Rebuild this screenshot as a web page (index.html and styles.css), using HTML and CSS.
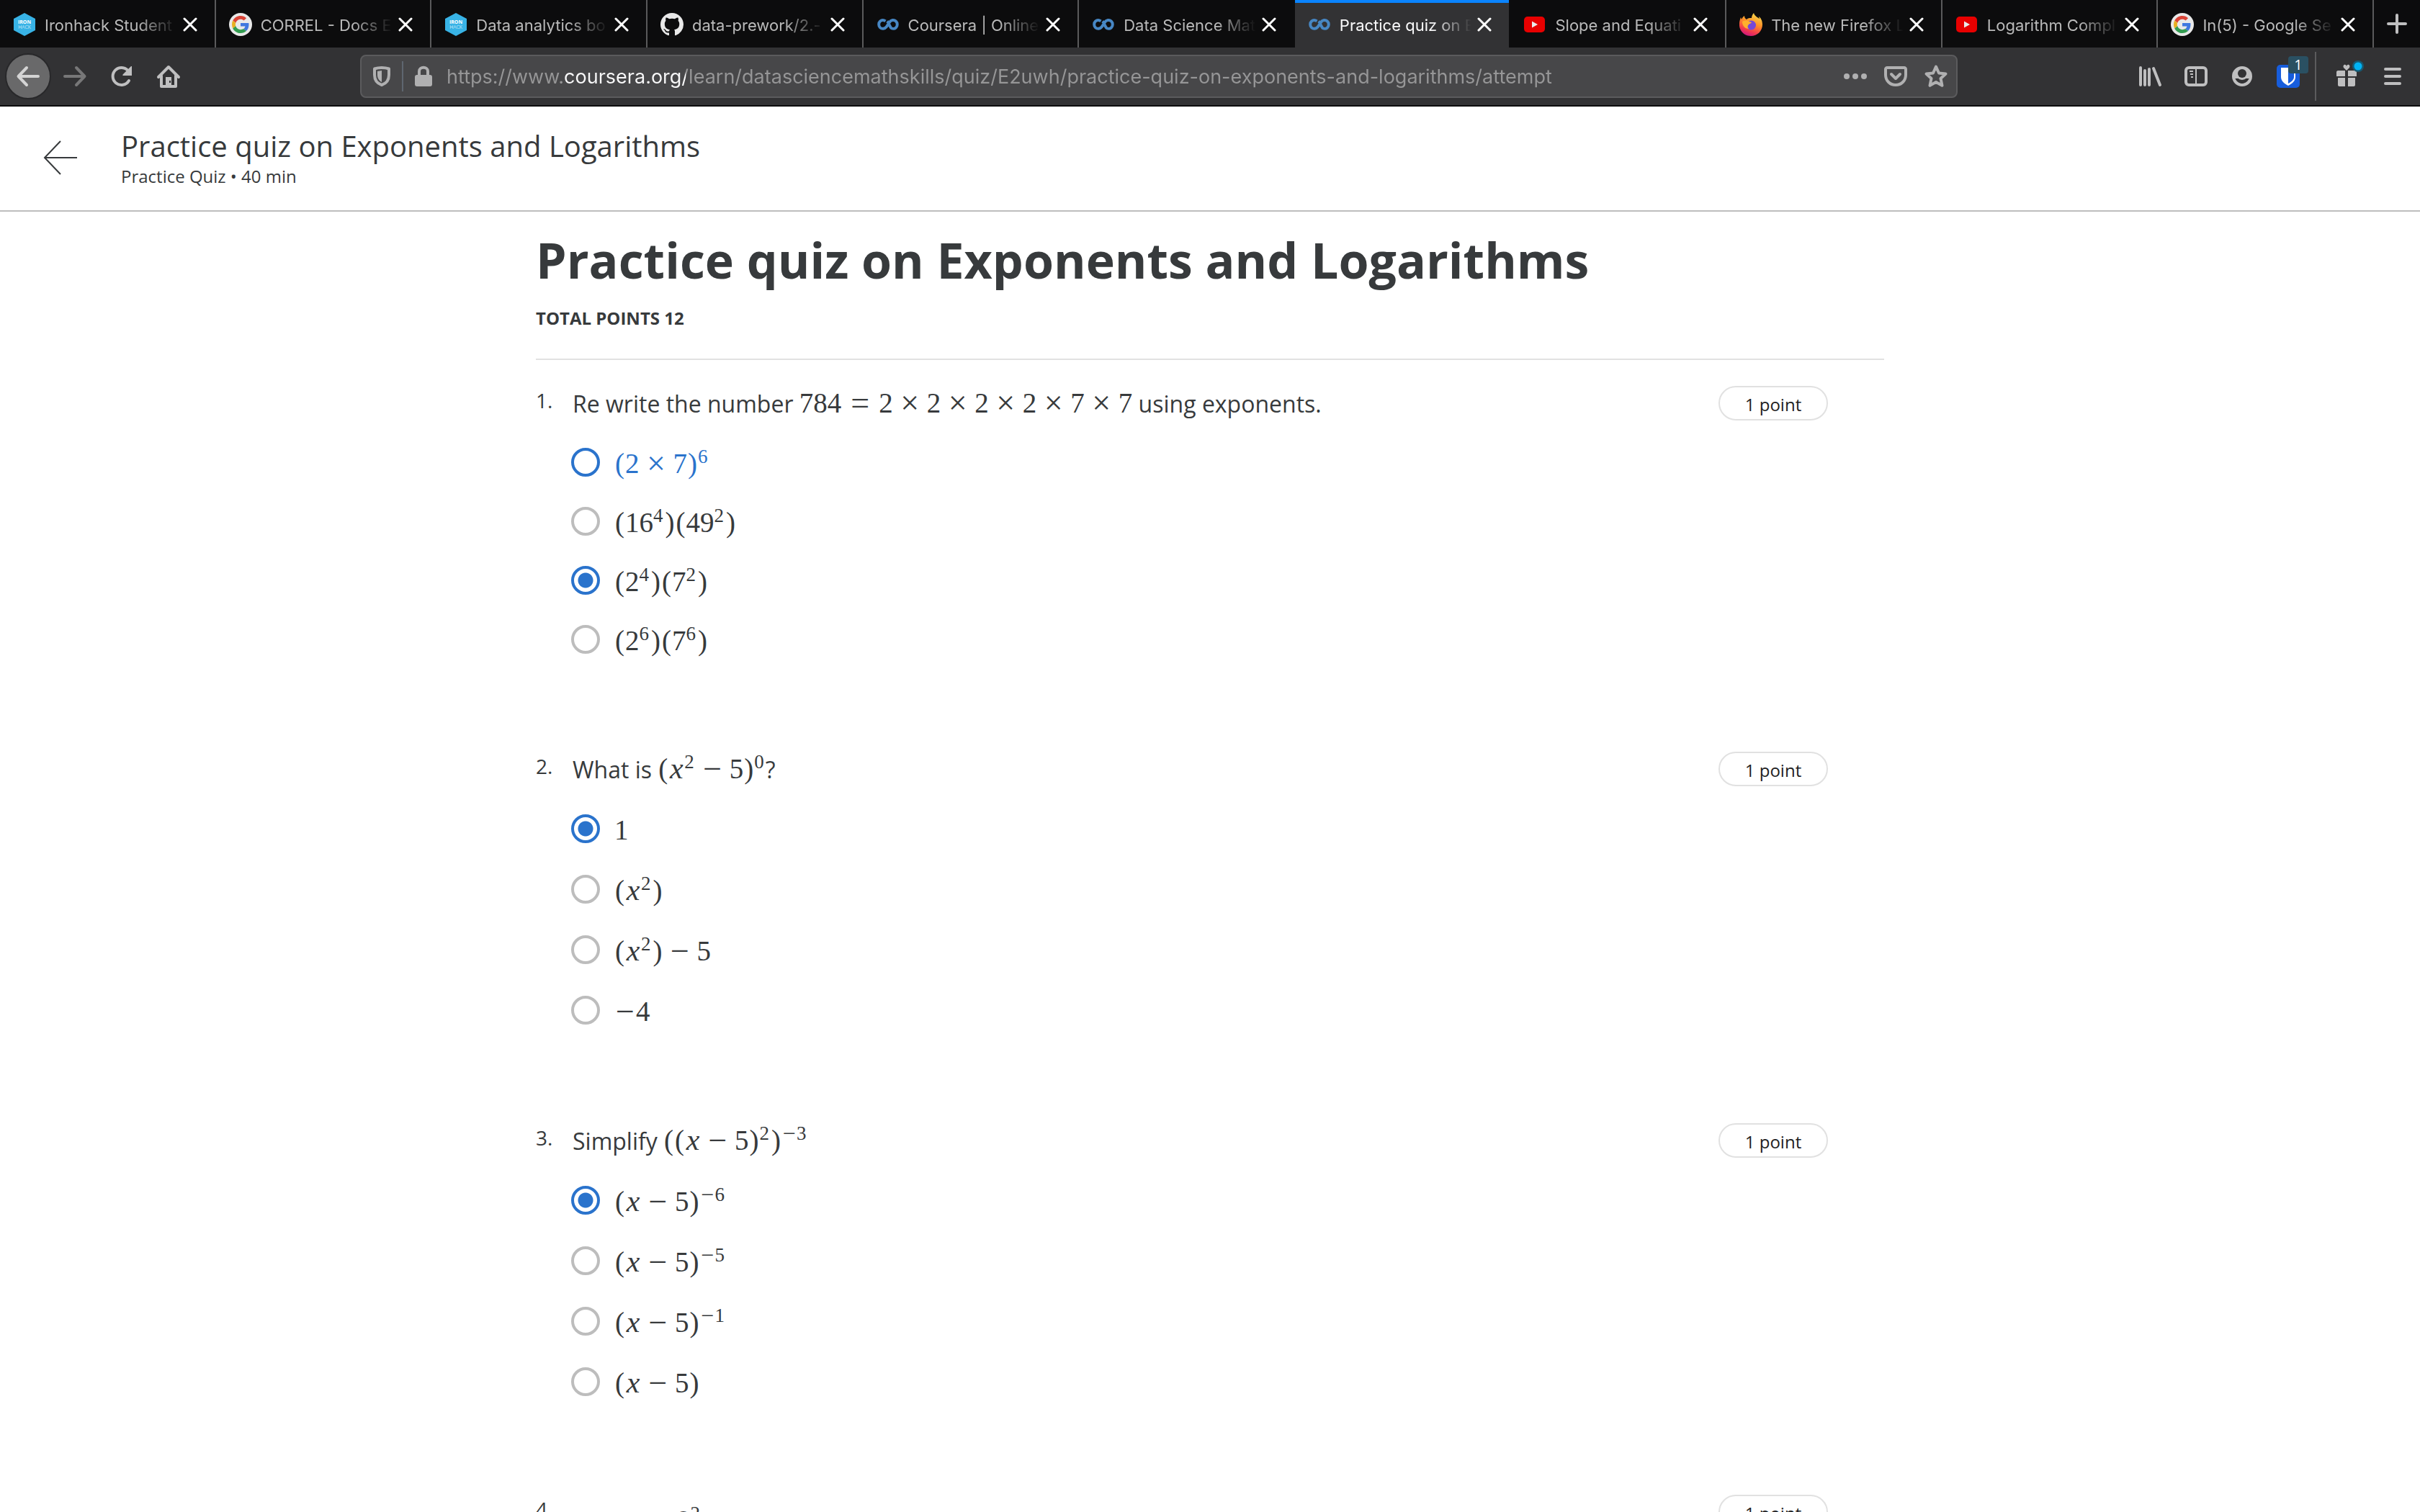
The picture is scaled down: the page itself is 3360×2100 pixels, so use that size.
FILE: index.html
```html
<!DOCTYPE html>
<html lang="en">
<head>
<meta charset="utf-8">
<title>Practice quiz on Exponents and Logarithms</title>
<link rel="stylesheet" href="styles.css">
</head>
<body>
<svg class="defs" aria-hidden="true">
  <symbol id="close" viewBox="0 0 20 20"><path d="M2 2l16 16M18 2L2 18" fill="none" stroke="#fff" stroke-width="3" stroke-linecap="round"/></symbol>
  <symbol id="google" viewBox="0 0 32 32"><circle cx="16" cy="16" r="16" fill="#e9e9e9"/><g transform="translate(4 4)scale(.5)"><path fill="#db4437" d="M24 9.500c3.540 0 6.710 1.220 9.210 3.600l6.850-6.850C35.900 2.380 30.470 0 24 0 14.620 0 6.510 5.380 2.560 13.220l7.980 6.190C12.430 13.720 17.740 9.500 24 9.500z"/><path fill="#4078e0" d="M46.980 24.550c0-1.570-.15-3.090-.38-4.550H24v9.020h12.940c-.58 2.960-2.260 5.480-4.780 7.180l7.730 6c4.510-4.180 7.090-10.360 7.090-17.650z"/><path fill="#e8b021" d="M10.530 28.590c-.48-1.450-.76-2.990-.76-4.590s.27-3.140.76-4.590l-7.980-6.190C.92 16.460 0 20.120 0 24c0 3.880.92 7.540 2.560 10.780l7.970-6.190z"/><path fill="#329c50" d="M24 48c6.480 0 11.930-2.130 15.890-5.810l-7.730-6c-2.150 1.450-4.920 2.300-8.160 2.300-6.260 0-11.570-4.220-13.470-9.910l-7.980 6.190C6.510 42.620 14.620 48 24 48z"/></g></symbol>
  <symbol id="github" viewBox="0 0 16 16"><path fill="#e9e9e9" d="M8 0C3.580 0 0 3.580 0 8c0 3.540 2.290 6.530 5.470 7.590.4.070.55-.17.55-.38 0-.19-.01-.82-.01-1.490-2.010.37-2.530-.49-2.690-.94-.09-.23-.48-.94-.82-1.130-.28-.15-.68-.52-.01-.53.63-.01 1.080.58 1.230.82.720 1.210 1.870.87 2.330.66.070-.52.280-.87.510-1.070-1.780-.2-3.640-.89-3.640-3.950 0-.87.310-1.590.82-2.150-.08-.2-.36-1.020.08-2.120 0 0 .67-.21 2.200.82.640-.18 1.320-.27 2-.27s1.360.09 2 .27c1.530-1.040 2.200-.82 2.200-.82.440 1.100.16 1.920.08 2.120.51.56.82 1.270.82 2.150 0 3.070-1.870 3.750-3.650 3.950.29.25.54.73.54 1.480 0 1.070-.01 1.930-.01 2.200 0 .21.15.46.55.38A8.013 8.013 0 0016 8c0-4.420-3.580-8-8-8z"/></symbol>
  <symbol id="coursera" viewBox="0 0 32 32"><path d="M12.500 11.400C10 9.700 7 9.800 5 11.600c-2.400 2.200-2.400 6.600 0 8.800 2.500 2.200 6.400 1.800 8.500-.9l4.500-6.700c2.100-3.100 6.300-3.700 8.900-1.300 2.500 2.300 2.500 6.700 0 8.900-2 1.800-5.100 1.900-7.300.1M14.800 11.500c1.800 1.800 3.300 6.600 5.200 9" fill="none" stroke="#4787c4" stroke-width="4"/></symbol>
  <symbol id="youtube" viewBox="0 0 32 32"><rect x="1" y="5" width="29" height="22" rx="5" fill="#e80000"/><path d="M12 11.500v9l8-4.500z" fill="#e9e9e9"/></symbol>
  <linearGradient id="flame" x1=".8" y1="0" x2=".4" y2="1"><stop offset="0" stop-color="#f4e04f"/><stop offset=".45" stop-color="#ff9228"/><stop offset=".8" stop-color="#f2394e"/><stop offset="1" stop-color="#d0187c"/></linearGradient>
  <symbol id="firefox" viewBox="0 0 32 32"><path fill="url(#flame)" d="M20 0c-2 2-3 5-3 7-3 0-5 0-7 2C8 8 7 6 7 4 5 5 4 7 3 9L2 6C0 11-1 17 1 22c3 7 9 10 15 10 9 0 16-7 16-16 0-5-2-9-5-11 0 1 1 2 1 3-3-2-7-4-8-8z"/><circle cx="16.500" cy="17" r="6.500" fill="#7548d8"/><path fill="#ffb02c" d="M4 12c4-2 8-1 10 0l3 1c-1 2-4 2-4 3-2 2-2 4 0 6-5 0-9-4-9-10z"/></symbol>
</svg>

<div class="window">
  <nav class="tabs" aria-label="Tabs">
    <div class="tab"><svg class="favicon" viewBox="0 0 32 32"><path d="M16 0l15 8v16l-15 8-15-8V8z" fill="#38b3e6"/><text x="16" y="15" class="hex-bold">IRON</text><text x="16" y="22" class="hex-light">HACK</text></svg><span class="tab-title">Ironhack Student</span><button class="tab-close" aria-label="Close tab"><svg><use href="#close"/></svg></button></div>
    <div class="tab"><svg class="favicon"><use href="#google"/></svg><span class="tab-title">CORREL - Docs E</span><button class="tab-close" aria-label="Close tab"><svg><use href="#close"/></svg></button></div>
    <div class="tab"><svg class="favicon" viewBox="0 0 32 32"><path d="M16 0l15 8v16l-15 8-15-8V8z" fill="#38b3e6"/><text x="16" y="15" class="hex-bold">IRON</text><text x="16" y="22" class="hex-light">HACK</text></svg><span class="tab-title">Data analytics bo</span><button class="tab-close" aria-label="Close tab"><svg><use href="#close"/></svg></button></div>
    <div class="tab"><svg class="favicon"><use href="#github"/></svg><span class="tab-title">data-prework/2.-</span><button class="tab-close" aria-label="Close tab"><svg><use href="#close"/></svg></button></div>
    <div class="tab"><svg class="favicon"><use href="#coursera"/></svg><span class="tab-title">Coursera | Online</span><button class="tab-close" aria-label="Close tab"><svg><use href="#close"/></svg></button></div>
    <div class="tab before-active"><svg class="favicon"><use href="#coursera"/></svg><span class="tab-title">Data Science Mat</span><button class="tab-close" aria-label="Close tab"><svg><use href="#close"/></svg></button></div>
    <div class="tab active"><svg class="favicon"><use href="#coursera"/></svg><span class="tab-title">Practice quiz on E</span><button class="tab-close" aria-label="Close tab"><svg><use href="#close"/></svg></button></div>
    <div class="tab"><svg class="favicon"><use href="#youtube"/></svg><span class="tab-title">Slope and Equati</span><button class="tab-close" aria-label="Close tab"><svg><use href="#close"/></svg></button></div>
    <div class="tab"><svg class="favicon"><use href="#firefox"/></svg><span class="tab-title">The new Firefox L</span><button class="tab-close" aria-label="Close tab"><svg><use href="#close"/></svg></button></div>
    <div class="tab"><svg class="favicon"><use href="#youtube"/></svg><span class="tab-title">Logarithm Compl</span><button class="tab-close" aria-label="Close tab"><svg><use href="#close"/></svg></button></div>
    <div class="tab"><svg class="favicon"><use href="#google"/></svg><span class="tab-title">In(5) - Google Se</span><button class="tab-close" aria-label="Close tab"><svg><use href="#close"/></svg></button></div>
    <button class="new-tab" aria-label="New tab"><svg width="32" height="32" viewBox="0 0 32 32"><path d="M16 4v24M4 16h24" fill="none" stroke="#bfbfc0" stroke-width="4" stroke-linecap="round"/></svg></button>
  </nav>

  <div class="toolbar">
    <div class="nav-buttons">
      <button class="tool back" aria-label="Back"><svg class="icon" viewBox="0 0 32 32"><path class="line" d="M30 16H3M14 4L2.500 16 14 28"/></svg></button>
      <button class="tool forward" aria-label="Forward"><svg class="icon" viewBox="0 0 32 32"><path class="line" d="M2 16h27M18 4l11.500 12L18 28"/></svg></button>
      <button class="tool" aria-label="Reload"><svg class="icon" viewBox="0 0 32 32"><path class="line" d="M26 22a12 12 0 1 1 0-12"/><path class="fill" d="M30 2v13H18c-1 0-1-1 0-2L29 2z"/></svg></button>
      <button class="tool" aria-label="Home"><svg class="icon" viewBox="0 0 32 32"><path class="line" d="M2 17L16 3l14 14M6 15v15h20V15"/><path class="fill" d="M12 17h8v13h-8z"/><path d="M17 22h2v3h-2z" fill="#323234"/></svg></button>
    </div>
    <div class="urlbar">
      <button class="url-tool" aria-label="Tracking protection"><svg class="icon" viewBox="0 0 32 32"><path class="line" d="M16 4c4 0 7 .5 10 1.500V14c0 7-4 12-10 14C10 26 6 21 6 14V5.500C9 4.500 12 4 16 4z"/><path class="fill" d="M16 8v16c-4-2-6-6-6-10V9z"/></svg></button>
      <span class="url-divider"></span>
      <button class="url-tool" aria-label="Connection secure"><svg class="icon" viewBox="0 0 32 32"><path class="line" d="M10 15V9c0-7 12-7 12 0v6"/><rect class="fill" x="4" y="14" width="24" height="16" rx="3"/></svg></button>
      <input class="url" type="text" aria-label="Address" value="https://www.coursera.org/learn/datasciencemathskills/quiz/E2uwh/practice-quiz-on-exponents-and-logarithms/attempt">
      <button class="url-tool" aria-label="Page actions"><svg class="icon" viewBox="0 0 32 32"><circle class="fill" cx="4" cy="16" r="4"/><circle class="fill" cx="16" cy="16" r="4"/><circle class="fill" cx="28" cy="16" r="4"/></svg></button>
      <button class="url-tool" aria-label="Save to Pocket"><svg class="icon" viewBox="0 0 32 32"><path class="line" d="M4 4h24c1 0 2 1 2 2v8c0 8-6 14-14 14S2 22 2 14V6c0-1 1-2 2-2zM10 13l6 6 6-6"/></svg></button>
      <button class="url-tool" aria-label="Bookmark"><svg class="icon" viewBox="0 0 32 32"><path class="line" d="M16 2.500l4 9 9.500 1-7 6.500 2 9.800L16 24l-8.500 4.800 2-9.800-7-6.500 9.500-1z"/></svg></button>
    </div>
    <div class="tool-buttons">
      <button class="tool" aria-label="Library"><svg class="icon" viewBox="0 0 32 32"><path class="line" d="M3 4v24M9 8v20M15 6v22M21 5l9 23"/></svg></button>
      <button class="tool" aria-label="Sidebar"><svg class="icon" viewBox="0 0 32 32"><rect class="line" x="2" y="4" width="28" height="24" rx="4"/><path d="M7 9h5M8 13h4M9 17h3" class="thin"/><path d="M16 4v24" class="thin"/></svg></button>
      <button class="tool" aria-label="Account"><svg class="icon" viewBox="0 0 32 32"><circle class="line" cx="16" cy="16" r="12"/><circle class="line" cx="16" cy="12" r="7"/><path class="fill" d="M5 10h5c0 8 12 8 12 0h5v9H5z"/><circle cx="16" cy="12" r="6" fill="#323234"/><path d="M8 19c4 4 12 4 16 0-2 9-14 9-16 0z" fill="#323234"/></svg></button>
      <button class="tool bitwarden" aria-label="Bitwarden"><svg class="icon" viewBox="0 0 32 32"><rect width="32" height="32" rx="5" fill="#175ddc"/><path d="M6 4h20v13c0 5-4 9-10 12C10 26 6 22 6 17z" fill="#fff"/><path d="M16 7h8v10c0 4-4 7-8 9z" fill="#175ddc"/></svg><span class="badge">1</span></button>
      <span class="tool-divider"></span>
      <button class="tool" aria-label="What's new"><svg class="icon gift" viewBox="0 0 32 32"><path class="fill" d="M2 10c0-1 1-2 2-2h10v8H2zM18 8h10c1 0 2 1 2 2v6H18zM4 18h10v12H6c-1 0-2-1-2-2zM18 18h10v10c0 1-1 2-2 2h-8zM16 8l-4-4c-2-4 3-6 4-2 1-4 6-2 4 2z"/><circle cx="32" cy="2" r="8" fill="#175a73"/><circle cx="32" cy="2" r="5.500" fill="#00b3f4"/></svg></button>
      <button class="tool" aria-label="Menu"><svg class="icon" viewBox="0 0 32 32"><path class="line" d="M6 6h20M6 16h20M6 26h20"/></svg></button>
    </div>
  </div>

  <div class="page">
    <header class="quiz-header">
      <a class="exit" href="#" aria-label="Back to course"><svg width="48" height="48" viewBox="0 0 48 48"><path d="M24 1L2 24l22 23M2 24h45" fill="none" stroke="#373a3c" stroke-width="2"/></svg></a>
      <div>
        <p class="header-title">Practice quiz on Exponents and Logarithms</p>
        <p class="header-meta">Practice Quiz • 40 min</p>
      </div>
    </header>
    <main class="quiz">
      <h1>Practice quiz on Exponents and Logarithms</h1>
      <p class="total">TOTAL POINTS 12</p>
      <form class="questions">
        <fieldset class="question compact">
          <div class="prompt-row"><span class="number">1.</span><p class="prompt" id="q1">Re write the number <span class="math">784<i class="rel">=</i>2<i class="op">×</i>2<i class="op">×</i>2<i class="op">×</i>2<i class="op">×</i>7<i class="op">×</i>7</span> using exponents.</p><span class="points">1 point</span></div>
          <div class="options" role="radiogroup" aria-labelledby="q1">
            <label class="option hovered"><input type="radio" name="q1"><span class="math"><b>(</b>2<i class="op">×</i>7<b>)</b><sup>6</sup></span></label>
            <label class="option"><input type="radio" name="q1"><span class="math"><b>(</b>16<sup>4</sup><b>)</b><b>(</b>49<sup>2</sup><b>)</b></span></label>
            <label class="option"><input type="radio" name="q1" checked><span class="math"><b>(</b>2<sup>4</sup><b>)</b><b>(</b>7<sup>2</sup><b>)</b></span></label>
            <label class="option"><input type="radio" name="q1"><span class="math"><b>(</b>2<sup>6</sup><b>)</b><b>(</b>7<sup>6</sup><b>)</b></span></label>
          </div>
        </fieldset>
        <fieldset class="question">
          <div class="prompt-row"><span class="number">2.</span><p class="prompt" id="q2">What is <span class="math"><b>(</b><var>x</var><sup>2</sup><i class="op">−</i>5<b>)</b><sup>0</sup></span>?</p><span class="points">1 point</span></div>
          <div class="options" role="radiogroup" aria-labelledby="q2">
            <label class="option"><input type="radio" name="q2" checked><span class="math">1</span></label>
            <label class="option"><input type="radio" name="q2"><span class="math"><b>(</b><var>x</var><sup>2</sup><b>)</b></span></label>
            <label class="option"><input type="radio" name="q2"><span class="math"><b>(</b><var>x</var><sup>2</sup><b>)</b><i class="op">−</i>5</span></label>
            <label class="option"><input type="radio" name="q2"><span class="math"><i class="neg">−</i>4</span></label>
          </div>
        </fieldset>
        <fieldset class="question">
          <div class="prompt-row"><span class="number">3.</span><p class="prompt" id="q3">Simplify <span class="math"><b>(</b><b>(</b><var>x</var><i class="op">−</i>5<b>)</b><sup>2</sup><b>)</b><sup><i class="neg">−</i>3</sup></span></p><span class="points">1 point</span></div>
          <div class="options" role="radiogroup" aria-labelledby="q3">
            <label class="option"><input type="radio" name="q3" checked><span class="math"><b>(</b><var>x</var><i class="op">−</i>5<b>)</b><sup><i class="neg">−</i>6</sup></span></label>
            <label class="option"><input type="radio" name="q3"><span class="math"><b>(</b><var>x</var><i class="op">−</i>5<b>)</b><sup><i class="neg">−</i>5</sup></span></label>
            <label class="option"><input type="radio" name="q3"><span class="math"><b>(</b><var>x</var><i class="op">−</i>5<b>)</b><sup><i class="neg">−</i>1</sup></span></label>
            <label class="option"><input type="radio" name="q3"><span class="math"><b>(</b><var>x</var><i class="op">−</i>5<b>)</b></span></label>
          </div>
        </fieldset>
        <fieldset class="question">
          <div class="prompt-row"><span class="number">4.</span><p class="prompt has-fraction" id="q4">Simplify <span class="math fraction"><span>8<sup>2</sup></span><span>8<sup>7</sup></span></span></p><span class="points">1 point</span></div>
        </fieldset>
      </form>
    </main>
  </div>
</div>
</body>
</html>
```
FILE: styles.css
```css
* { box-sizing: border-box; }
body, p, h1 { margin: 0; }
body { background: #fff; color: #373a3c; font-family: "Open Sans", sans-serif; }
button { padding: 0; border: 0; background: none; color: inherit; font: inherit; display: grid; place-items: center; }
.defs { position: absolute; width: 0; height: 0; }
.window { display: flex; flex-direction: column; height: 100vh; }

/* Tab strip */
.tabs { display: flex; flex: none; height: 66px; background: #0c0c0d; font-family: Inter, sans-serif; font-size: 22px; color: #bababa; }
.tab { display: flex; align-items: center; flex: 1; min-width: 0; padding: 2px 24px 0 18px; border-right: 2px solid #5a5a5b; }
.tab.before-active { border-right-color: transparent; }
.tab.active { border-right-color: #0c0c0d; background: #323234; color: #f9f9fa; box-shadow: inset 0 4px #0a84ff; }
.favicon { flex: none; width: 32px; height: 32px; }
.tab-title { flex: 1; min-width: 0; margin: 2px 8px 0 12px; overflow: hidden; white-space: nowrap; line-height: 32px; -webkit-mask-image: linear-gradient(to left, transparent, #000 56px); mask-image: linear-gradient(to left, transparent, #000 56px); }
.tab-close, .tab-close svg { flex: none; width: 20px; height: 20px; }
.new-tab { flex: none; width: 64px; }
.hex-bold, .hex-light { fill: #fff; font: bold 7px "Open Sans", sans-serif; text-anchor: middle; }
.hex-light { font-weight: 300; }

/* Navigation toolbar */
.toolbar { display: flex; align-items: center; flex: none; height: 82px; padding: 0 6px 0 7px; border-bottom: 2px solid #0c0c0d; background: #323234; color: #bfbfc0; }
.nav-buttons { display: flex; gap: 1px; margin-right: 234px; }
.tool { width: 64px; height: 64px; }
.back { border: 2px solid #28282a; border-radius: 50%; background: #69696a; color: #d4d4d4; }
.forward { color: #777778; }
.icon { width: 32px; height: 32px; overflow: visible; }
.line { fill: none; stroke: currentColor; stroke-width: 4; stroke-linecap: round; stroke-linejoin: round; }
.thin { fill: none; stroke: currentColor; stroke-width: 2; }
.fill { fill: currentColor; }
.urlbar { display: flex; align-items: center; flex: 1; height: 60px; border: 2px solid #5b5b5d; border-radius: 8px; background: #474749; color: #b0b0b1; }
.url-tool { flex: none; width: 56px; height: 56px; }
.url-divider { width: 2px; height: 42px; background: #5f6670; }
.url { flex: 1; min-width: 0; margin: 0 0 0 4px; padding: 2px 0 0; border: 0; outline: 0; font-family: Inter, sans-serif; font-size: 27px; line-height: 40px; background: linear-gradient(90deg, #969697 164px, #f9f9fa 164px, #f9f9fa 332px, #969697 332px); background-clip: text; -webkit-background-clip: text; color: transparent; }
.tool-buttons { display: flex; align-items: center; margin-left: 235px; }
.tool-divider { width: 2px; height: 68px; margin: 0 10px 0 5px; background: #5b5b5d; }
.bitwarden { position: relative; }
.badge { position: absolute; top: 4px; right: 4px; width: 28px; height: 24px; border-radius: 4px; background: #2a5062; color: #fff; font: 500 20px/24px "Open Sans", sans-serif; }

/* Quiz header */
.page { flex: 1; min-height: 0; overflow-y: auto; scrollbar-width: none; }
.quiz-header { display: flex; align-items: center; gap: 60px; padding: 29px 60px 31px; border-bottom: 2px solid #bdbdbd; }
.exit { display: grid; }
.header-title { font-size: 40px; line-height: 52px; }
.header-meta { font-size: 24px; line-height: 32px; }

/* Quiz body */
.quiz { max-width: 1872px; margin: 0 auto; padding-top: 27px; }
h1 { font-size: 68px; line-height: 80px; }
.total { padding: 25px 0 40px; border-bottom: 2px solid #e1e1e1; font-size: 24px; font-weight: 700; line-height: 32px; }
.questions { padding-top: 36px; }
.question { margin: 0 0 115px; padding: 0; border: 0; }
.prompt-row { display: grid; grid-template-columns: 51px 1fr auto; align-items: start; padding-right: 78px; }
.number { font-size: 28px; line-height: 40px; }
.prompt { font-size: 32px; line-height: 50px; }
.points { width: 152px; height: 48px; border: 2px solid #e1e1e1; border-radius: 24px; color: #1f1f1f; font-size: 24px; line-height: 48px; text-align: center; }
.options { padding: 15px 0 0 49px; }
.option { display: flex; align-items: center; gap: 20px; width: max-content; height: 84px; }
.compact .option { height: 82px; }
.option .math { padding-top: 4px; line-height: 44px; }
.option.hovered { color: #2a73cc; }
input[type="radio"] { appearance: none; width: 40px; height: 40px; margin: 0; border: 4px solid #bdbdbd; border-radius: 50%; }
input[type="radio"]:checked { border-color: #2a73cc; background: radial-gradient(circle, #2a73cc 10px, transparent 11px); }
.hovered input[type="radio"] { border-color: #2a73cc; }

/* Math */
.math { font-family: "Liberation Serif", serif; font-size: 39px; line-height: 0; white-space: nowrap; }
.math i, .math b, .math var { display: inline-block; font-weight: 400; font-style: normal; text-align: center; line-height: 0; }
.math i { font-size: 46px; vertical-align: -2px; }
.math .op { width: 47px; }
.math .rel { width: 52px; }
.math .neg { width: 30px; }
.math b { width: 15px; }
.math var { width: 22px; font-size: 42px; font-style: italic; }
.math sup { margin-right: 2px; font-size: 27px; line-height: 0; vertical-align: 14px; }
.math sup .neg { width: 21px; font-size: 32px; }
.has-fraction { padding-top: 12px; }
.fraction { display: inline-flex; flex-direction: column; vertical-align: middle; margin-left: 18px; line-height: 48px; }
.fraction span + span { border-top: 2px solid #373a3c; }
```
